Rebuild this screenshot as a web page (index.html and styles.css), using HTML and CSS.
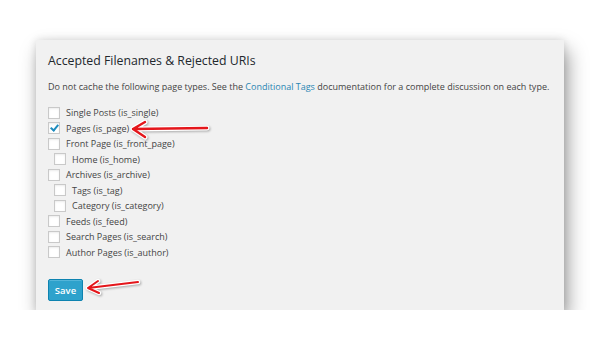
FILE: index.html
```html
<!DOCTYPE html>
<html lang="en">
<head>
    <meta charset="UTF-8">
    <title>Accepted Filenames &amp; Rejected URIs</title>
    <link rel="stylesheet" href="styles.css">
</head>
<body>
    <div class="panel">
        <h3>Accepted Filenames &amp; Rejected URIs</h3>
        <p class="desc">Do not cache the following page types. See the <a href="#">Conditional Tags</a> documentation for a complete discussion on each type.</p>

        <ul class="types">
            <li><span class="box"></span>Single Posts (is_single)</li>
            <li><span class="box checked"></span>Pages (is_page)</li>
            <li><span class="box"></span>Front Page (is_front_page)</li>
            <li class="sub"><span class="box"></span>Home (is_home)</li>
            <li><span class="box"></span>Archives (is_archive)</li>
            <li class="sub"><span class="box"></span>Tags (is_tag)</li>
            <li class="sub"><span class="box"></span>Category (is_category)</li>
            <li><span class="box"></span>Feeds (is_feed)</li>
            <li><span class="box"></span>Search Pages (is_search)</li>
            <li><span class="box"></span>Author Pages (is_author)</li>
        </ul>

        <button class="save-btn">Save</button>

        <svg class="arrow arrow-pages" width="84" height="22" viewBox="0 0 84 22">
            <g fill="none" stroke-linecap="round" stroke-linejoin="round">
                <path d="M78 9 L4 10 M16 3 L4 10 L16 18" stroke="#fff" stroke-width="5"/>
                <path d="M78 9 L4 10 M16 3 L4 10 L16 18" stroke="#e4161b" stroke-width="2.4"/>
            </g>
        </svg>
        <svg class="arrow arrow-save" width="58" height="18" viewBox="0 0 58 18">
            <g fill="none" stroke-linecap="round" stroke-linejoin="round">
                <path d="M54 4 L4 10 M14 3 L4 10 L15 15" stroke="#fff" stroke-width="4.5"/>
                <path d="M54 4 L4 10 M14 3 L4 10 L15 15" stroke="#e4161b" stroke-width="2"/>
            </g>
        </svg>
    </div>
</body>
</html>
```

FILE: styles.css
```css
body {
    margin: 0;
    background: #fff;
    font-family: "Open Sans", "DejaVu Sans", sans-serif;
    color: #444;
}

.panel {
    position: relative;
    margin: 40px 36px 0;
    height: 270px;
    box-sizing: border-box;
    padding: 11px 12px;
    background: #f1f1f1;
    box-shadow: 4px 10px 18px rgba(0,0,0,0.38), 0 0 8px rgba(0,0,0,0.12);
}

h3 {
    margin: 0;
    font-size: 12.3px;
    font-weight: 400;
    line-height: 20px;
    color: #23282d;
}

.desc {
    margin: 9px 0 11px;
    font-size: 9px;
    line-height: 14px;
    white-space: nowrap;
}

.desc a {
    color: #2a86b3;
    text-decoration: none;
}

.types {
    list-style: none;
    margin: 0;
    padding: 0;
    font-size: 9px;
}

.types li {
    display: flex;
    align-items: center;
    height: 15.5px;
}

.types li.sub {
    padding-left: 6px;
}

.box {
    position: relative;
    width: 10px;
    height: 10px;
    margin-right: 6px;
    background: #fff;
    border: 1px solid #c9c9c9;
    box-shadow: inset 0 1px 2px rgba(0,0,0,0.08);
}

.box.checked::after {
    content: "";
    position: absolute;
    left: 3px;
    top: 0;
    width: 3px;
    height: 6px;
    border: solid #1e8cbe;
    border-width: 0 2px 2px 0;
    transform: rotate(40deg);
}

.save-btn {
    display: block;
    margin-top: 19px;
    padding: 0;
    width: 35px;
    height: 22px;
    font-family: "Open Sans", "DejaVu Sans", sans-serif;
    font-size: 9.5px;
    font-weight: 600;
    color: #fff;
    background: #2ea2cc;
    border: 1px solid #0e83b0;
    border-radius: 2px;
    box-shadow: inset 0 1px 0 rgba(120,200,230,0.5);
}

.arrow {
    position: absolute;
    filter: drop-shadow(1px 1px 1px rgba(0,0,0,0.3));
}

.arrow-pages {
    left: 93px;
    top: 79px;
}

.arrow-save {
    left: 48px;
    top: 238px;
}
```
